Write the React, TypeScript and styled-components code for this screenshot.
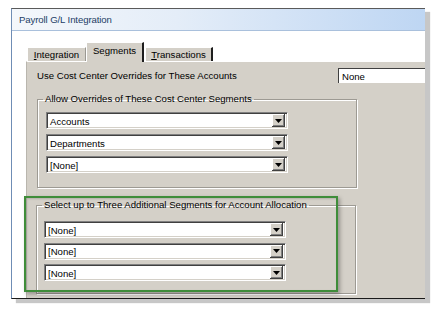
import React from 'react';
import styled, {createGlobalStyle} from "styled-components";

const GlobalStyle = createGlobalStyle`
  html, body {
    margin: 0;
    background: #ffffff;
  }
  body {
    font-family: "Liberation Sans", Arial, sans-serif;
    font-size: 9.6px;
    color: #000;
  }
  * {
    box-sizing: border-box;
  }
`

const Stage = styled.div`
  width: 439px;
  height: 313px;
  padding: 8px 0 0 11px;
`

const Window = styled.div`
  position: relative;
  width: 414px;
  height: 291px;
  border-top: 1px solid #5a5a5a;
  border-left: 1px solid #6f8db5;
  border-bottom: 1px solid #1a1a1a;
  box-shadow: 5px 4px 1px rgba(0, 0, 0, 0.22);
  background: #ffffff;
  display: flex;
  flex-direction: column;
  overflow: hidden;
`

const TitleBar = styled.div`
  height: 22px;
  flex: none;
  display: flex;
  align-items: center;
  padding-left: 7px;
  background: linear-gradient(to right, #f4f7fb 0%, #e4edf8 40%, #bed6f3 100%);
  border-bottom: 1px solid #a9c0dc;
  color: #233d66;
  letter-spacing: -0.1px;
`

const Body = styled.div`
  flex: 1;
  display: flex;
  padding-left: 14px;
`

const Content = styled.div`
  flex: 1;
  display: flex;
  flex-direction: column;
`

const TabStrip = styled.div`
  height: 30px;
  flex: none;
  display: flex;
  align-items: flex-end;
  padding-left: 1px;
`

const Tab = styled.div<{ $active?: boolean }>`
  height: ${p => (p.$active ? 20 : 14)}px;
  padding: ${p => (p.$active ? '2px 0 0 0' : '0')};
  display: flex;
  align-items: ${p => (p.$active ? 'flex-start' : 'center')};
  justify-content: center;
  width: ${p => p.$active ? 58 : 59}px;
  background: #d4d0c8;
  border-top: 1px solid #ffffff;
  border-left: 1px solid #ffffff;
  border-right: ${p => (p.$active ? '2px solid #1e1e1e' : '1px solid #9a9892')};
  margin-bottom: ${p => (p.$active ? '-1px' : '0')};
  position: relative;
  z-index: ${p => (p.$active ? 1 : 0)};

  &:last-child {
    width: 68px;
    margin-left: 1px;
    border-right: 2px solid #1e1e1e;
  }

  u {
    text-decoration: underline;
    text-underline-offset: 1px;
  }
`

const Panel = styled.div`
  flex: 1;
  background: #d4d0c8;
  border-top: 1px solid #ffffff;
  border-left: 1px solid #b9b6ae;
  padding: 6px 0 0 10px;
  display: flex;
  flex-direction: column;
  overflow: hidden;
`

const OverrideRow = styled.div`
  height: 15px;
  display: flex;
  align-items: center;
  justify-content: space-between;
  padding-right: 0;
  margin-right: -20px;
`

const TextField = styled.div`
  width: 107px;
  height: 15px;
  background: #ffffff;
  border-top: 1px solid #404040;
  border-left: 1px solid #404040;
  padding-left: 3px;
  display: flex;
  align-items: center;
`

const GroupBox = styled.fieldset<{ $left: number; $top: number }>`
  margin: ${p => p.$top}px 0 0 ${p => p.$left - 10}px;
  width: 320px;
  padding: 0;
  border: 1px solid #9d9a93;
  box-shadow: inset 1px 1px 0 #ffffff, 1px 1px 0 #ffffff;
  min-width: 0;

  legend {
    margin-left: 5px;
    padding: 0 2px;
    line-height: 12px;
    height: 12px;
  }
`

const GroupBody = styled.div<{ $pad: string; $gap: number }>`
  padding: ${p => p.$pad};
  display: flex;
  flex-direction: column;
  gap: ${p => p.$gap}px;
`

const ComboBox = styled.div`
  width: 242px;
  height: 17px;
  display: flex;
  align-items: center;
  background: #ffffff;
  border: 1px solid;
  border-color: #808080 #ffffff #ffffff #808080;
  box-shadow: inset 1px 1px 0 #404040, inset -1px -1px 0 #d4d0c8;
  padding: 2px 2px 2px 3px;
`

const ComboText = styled.span`
  flex: 1;
  padding-top: 1px;
`

const ComboButton = styled.div`
  width: 13px;
  height: 13px;
  background: #d4d0c8;
  box-shadow: inset -1px -1px 0 #404040, inset 1px 1px 0 #ffffff, inset -2px -2px 0 #808080;
  display: flex;
  align-items: center;
  justify-content: center;
`

const Highlight = styled.div`
  position: absolute;
  left: 12px;
  top: 187px;
  width: 314px;
  height: 96px;
  border: 2px solid #3f8d3a;
  box-shadow: 2px 2px 4px rgba(0, 0, 0, 0.3), inset 1px 1px 2px rgba(0, 0, 0, 0.15);
  pointer-events: none;
`

const Combo: React.FC<{ value: string }> = ({value}) => (
    <ComboBox>
        <ComboText>{value}</ComboText>
        <ComboButton>
            <svg width="7" height="4" viewBox="0 0 7 4">
                <polygon points="0,0 7,0 3.5,4" fill="#000"/>
            </svg>
        </ComboButton>
    </ComboBox>
);

export default function App() {
    return (
        <Stage>
            <GlobalStyle/>
            <Window>
                <TitleBar>Payroll G/L Integration</TitleBar>
                <Body>
                    <Content>
                        <TabStrip>
                            <Tab><span><u>I</u>ntegration</span></Tab>
                            <Tab $active><span>Se<u>g</u>ments</span></Tab>
                            <Tab><span><u>T</u>ransactions</span></Tab>
                        </TabStrip>
                        <Panel>
                            <OverrideRow>
                                <span>Use Cost Center Overrides for These Accounts</span>
                                <TextField>None</TextField>
                            </OverrideRow>
                            <GroupBox $left={10} $top={10}>
                                <legend>Allow Overrides of These Cost Center Segments</legend>
                                <GroupBody $pad={"7px 0 14px 8px"} $gap={5}>
                                    <Combo value={"Accounts"}/>
                                    <Combo value={"Departments"}/>
                                    <Combo value={"[None]"}/>
                                </GroupBody>
                            </GroupBox>
                            <GroupBox $left={9} $top={11}>
                                <legend>Select up to Three Additional Segments for Account Allocation</legend>
                                <GroupBody $pad={"10px 0 12px 7px"} $gap={4.5}>
                                    <Combo value={"[None]"}/>
                                    <Combo value={"[None]"}/>
                                    <Combo value={"[None]"}/>
                                </GroupBody>
                            </GroupBox>
                        </Panel>
                    </Content>
                </Body>
                <Highlight/>
            </Window>
        </Stage>
    );
}
